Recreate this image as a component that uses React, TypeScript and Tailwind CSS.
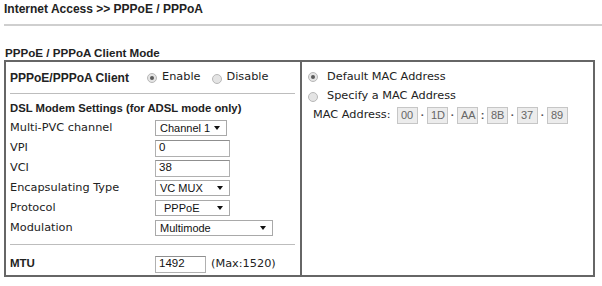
import React from "react";

const sans = "font-['Liberation_Sans',Arial,sans-serif]";
const verd = "font-['DejaVu_Sans',Verdana,sans-serif]";

function Radio({ checked }: { checked?: boolean }) {
  return (
    <span className="relative inline-flex h-[10px] w-[10px] shrink-0 items-center justify-center rounded-full border border-[#b8b8b8] bg-[#e4e4e4]">
      {checked && <span className="h-[4px] w-[4px] rounded-full bg-[#5a5a5a]" />}
    </span>
  );
}

function Caret() {
  return (
    <svg width="6" height="4" viewBox="0 0 6 4" className="shrink-0">
      <polygon points="0,0 6,0 3,4" fill="#111" />
    </svg>
  );
}

function Select({ w, text, pl = 4 }: { w: string; text: string; pl?: number }) {
  return (
    <div
      className={`flex h-[16px] items-center justify-between border border-[#a9a9a9] bg-white pr-[6px] ${w} ${sans} text-[11px] text-[#111]`}
    >
      <span className={pl === 4 ? "pl-[4px]" : "pl-[8px]"}>{text}</span>
      <Caret />
    </div>
  );
}

function Input({ w, value }: { w: string; value: string }) {
  return (
    <div
      className={`flex h-[17px] items-center border border-[#b0b0b0] border-t-[#8f8f8f] bg-white pl-[3px] ${w} ${sans} text-[11.5px] text-[#111]`}
    >
      {value}
    </div>
  );
}

function Row({ label, children }: { label: string; children: React.ReactNode }) {
  return (
    <div className="flex h-[20px] items-center pl-[4px]">
      <div className={`w-[145px] ${verd} text-[11.3px] text-[#222]`}>{label}</div>
      {children}
    </div>
  );
}

function MacBox({ v }: { v: string }) {
  return (
    <div
      className={`flex h-[17px] w-[21px] items-center border border-[#c6c6c6] bg-[#ececec] pl-[3px] ${sans} text-[11px] text-[#666]`}
    >
      {v}
    </div>
  );
}

function Sep({ c }: { c: string }) {
  return (
    <div className={`flex w-[9px] items-center justify-center ${sans} text-[11px] font-bold text-[#555]`}>{c}</div>
  );
}

export default function App() {
  const mac = ["00", "1D", "AA", "8B", "37", "89"];
  const seps = ["·", "·", ":", "·", "·"];
  return (
    <div className="h-[286px] w-[602px] overflow-hidden bg-white text-[#222]">
      <div className={`h-[24px] pl-[4px] pt-[2px] ${sans} text-[12px] font-bold leading-[14px] text-[#222]`}>
        Internet Access &gt;&gt; PPPoE / PPPoA
      </div>
      <div className="ml-[4px] h-[2px] bg-[#cfcfcf]" />
      <div className={`mt-[20px] h-[14px] pl-[5px] ${sans} text-[11.6px] font-bold leading-[14px] text-[#222]`}>
        PPPoE / PPPoA Client Mode
      </div>
      <div className="ml-[4px] flex h-[217px] w-[591px] border-2 border-[#666]">
        {/* left */}
        <div className="w-[296px] shrink-0 border-r-2 border-[#666]">
          <div className="flex h-[31px] items-center pl-[4px]">
            <div className={`w-[137px] ${sans} text-[12px] font-bold`}>PPPoE/PPPoA Client</div>
            <Radio checked />
            <span className={`ml-[5px] ${verd} text-[11.3px]`}>Enable</span>
            <span className="ml-[12px]">
              <Radio />
            </span>
            <span className={`ml-[4px] ${verd} text-[11.3px]`}>Disable</span>
          </div>
          <div className="ml-[4px] mr-[5px] h-[1px] bg-[#bdbdbd]" />
          <div className={`mt-[4px] flex h-[20px] items-center pl-[4px] ${sans} text-[11.3px] font-bold`}>
            DSL Modem Settings (for ADSL mode only)
          </div>
          <Row label="Multi-PVC channel">
            <Select w="w-[72px]" text="Channel 1" />
          </Row>
          <Row label="VPI">
            <Input w="w-[75px]" value="0" />
          </Row>
          <Row label="VCI">
            <Input w="w-[75px]" value="38" />
          </Row>
          <Row label="Encapsulating Type">
            <Select w="w-[75px]" text="VC MUX" />
          </Row>
          <Row label="Protocol">
            <Select w="w-[75px]" text="PPPoE" pl={8} />
          </Row>
          <Row label="Modulation">
            <Select w="w-[118px]" text="Multimode" />
          </Row>
          <div className="ml-[4px] mr-[5px] mt-[6px] h-[1px] bg-[#bdbdbd]" />
          <div className="mt-[9px] flex h-[20px] items-center pl-[4px]">
            <div className={`w-[145px] ${sans} text-[11.5px] font-bold`}>MTU</div>
            <Input w="w-[51px]" value="1492" />
            <span className={`ml-[5px] ${verd} text-[11.3px]`}>(Max:1520)</span>
          </div>
        </div>
        {/* right */}
        <div className="flex-1 pt-[5px]">
          <div className="flex h-[20px] items-center pl-[6px]">
            <Radio checked />
            <span className={`ml-[9px] ${verd} text-[11.3px]`}>Default MAC Address</span>
          </div>
          <div className="flex h-[19px] items-center pl-[6px]">
            <Radio />
            <span className={`ml-[9px] ${verd} text-[11.3px]`}>Specify a MAC Address</span>
          </div>
          <div className="flex h-[18px] items-center pl-[11px]">
            <span className={`w-[84px] ${verd} text-[11.3px]`}>MAC Address:</span>
            {mac.map((v, i) => (
              <React.Fragment key={v}>
                <MacBox v={v} />
                {i < seps.length && <Sep c={seps[i]} />}
              </React.Fragment>
            ))}
          </div>
        </div>
      </div>
    </div>
  );
}
